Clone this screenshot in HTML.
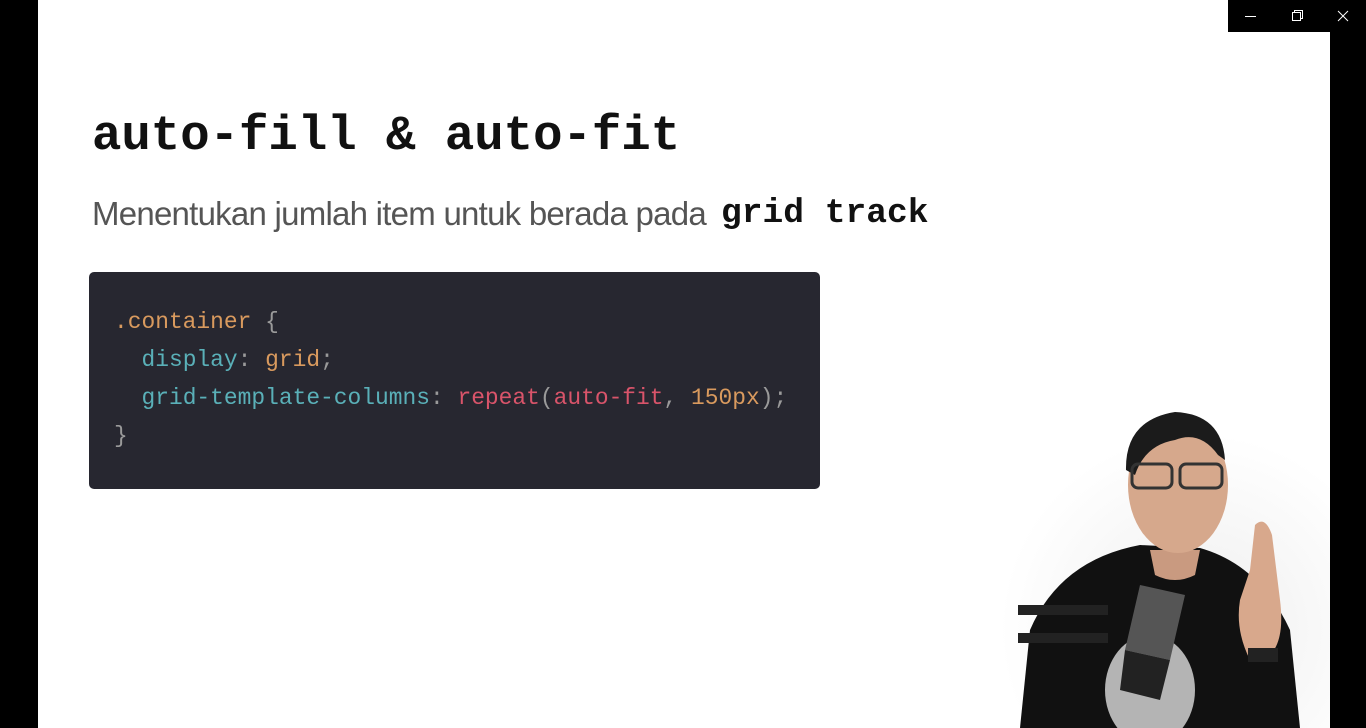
<!DOCTYPE html>
<html><head><meta charset="utf-8"><style>
*{margin:0;padding:0;box-sizing:border-box}
body{width:1366px;height:728px;background:#000;position:relative;overflow:hidden;font-family:"Liberation Sans",sans-serif}
#slide{position:absolute;left:38px;top:0;width:1292px;height:728px;background:#fff}
#tb{position:absolute;left:1228px;top:0;width:138px;height:32px;background:#000;color:#fff}
h1{position:absolute;left:92px;top:108px;font:bold 49px "Liberation Mono",monospace;color:#111;letter-spacing:0}
#sub{position:absolute;left:92px;top:195px;font-size:33px;color:#555;letter-spacing:-0.75px;white-space:pre}
#gt{position:absolute;left:721px;top:194px;font:bold 34.6px "Liberation Mono",monospace;color:#111;white-space:pre}
#code{position:absolute;left:89px;top:272px;width:731px;height:217px;background:#272730;border-radius:5px}
.c{position:absolute;font:22.9px "Liberation Mono",monospace;white-space:pre;color:#9a9a9a}
.o{color:#d99a5e}.b{color:#5ab0b8}.r{color:#d9546a}
</style></head><body>
<div id="slide"></div>
<h1>auto-fill &amp; auto-fit</h1>
<div id="sub">Menentukan jumlah item untuk berada pada</div>
<div id="gt">grid track</div>
<div id="code">
<div class="c" style="left:25px;top:37px"><span class="o">.container</span> {</div>
<div class="c" style="left:25px;top:75px">  <span class="b">display</span>: <span class="o">grid</span>;</div>
<div class="c" style="left:25px;top:113px">  <span class="b">grid-template-columns</span>: <span class="r">repeat</span>(<span class="r">auto-fit</span>, <span class="o">150px</span>);</div>
<div class="c" style="left:25px;top:151px">}</div>
</div>
<div id="tb">
<svg width="138" height="32"><g stroke="#fff" stroke-width="1" fill="none"><line x1="17" y1="16.5" x2="28" y2="16.5"/><rect x="64.5" y="12.5" width="8" height="8"/><path d="M66.5 12.5V10.5H74.5V18.5H72.5"/><line x1="110" y1="11" x2="120" y2="21"/><line x1="120" y1="11" x2="110" y2="21"/></g></svg>
</div>
<svg style="position:absolute;left:1000px;top:400px" width="330" height="328">
<defs><radialGradient id="sh" cx="0.6" cy="0.7" r="0.6"><stop offset="0" stop-color="#ddd"/><stop offset="1" stop-color="#fff"/></radialGradient></defs>
<rect width="330" height="328" fill="url(#sh)" opacity="0.5"/>
<path d="M20 328 L30 230 Q60 160 140 145 L200 148 Q260 165 290 230 L300 328Z" fill="#111"/>
<path d="M150 150 L200 150 L195 175 Q175 185 155 175Z" fill="#c99a80"/>
<ellipse cx="178" cy="85" rx="50" ry="68" fill="#d6a88c"/>
<path d="M126 70 Q125 20 175 12 Q222 14 225 60 L218 55 Q200 30 175 40 Q145 45 135 75Z" fill="#1b1b1b"/>
<g fill="none" stroke="#333" stroke-width="3"><rect x="132" y="64" width="40" height="24" rx="6"/><rect x="180" y="64" width="42" height="24" rx="6"/></g>
<path d="M255 125 Q265 115 272 135 L280 200 Q285 240 270 255 L250 260 Q235 230 240 200 L250 170Z" fill="#d8a88c"/>
<rect x="248" y="248" width="30" height="14" fill="#222"/>
<ellipse cx="150" cy="290" rx="45" ry="55" fill="#ddd" opacity="0.8"/>
<rect x="18" y="205" width="90" height="10" fill="#222"/>
<rect x="18" y="233" width="90" height="10" fill="#222"/>
<path d="M140 185 L185 195 L170 260 L125 250Z" fill="#555"/>
<path d="M125 250 L170 260 L160 300 L120 290Z" fill="#222"/>
</svg>
</body></html>
